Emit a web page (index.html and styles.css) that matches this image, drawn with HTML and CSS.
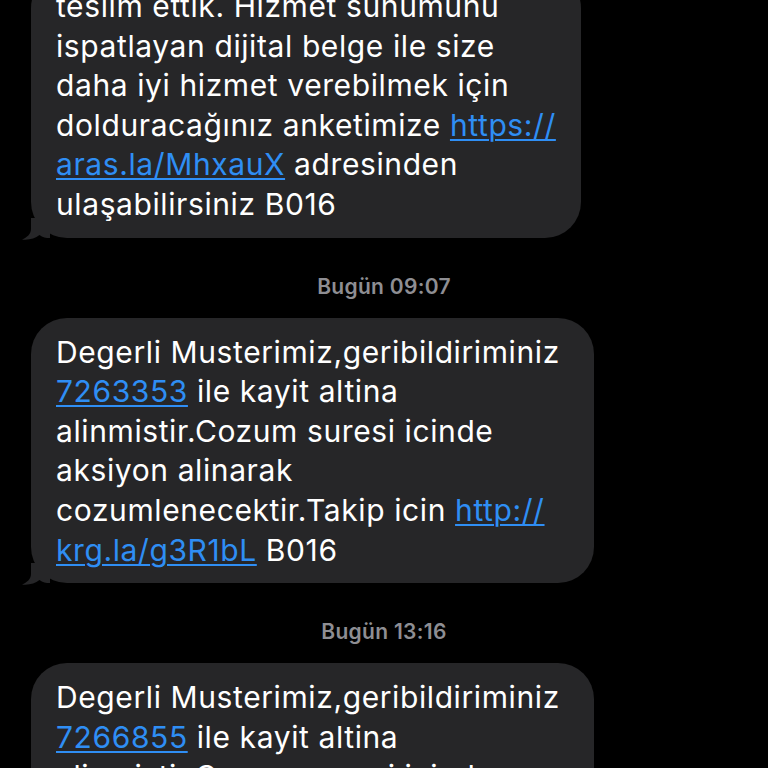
FILE: index.html
```html
<!DOCTYPE html>
<html lang="tr">
<head>
<meta charset="utf-8">
<title>Mesajlar</title>
<link rel="stylesheet" href="styles.css">
</head>
<body>
<main class="thread">
  <div class="bubble bubble-first">
    <p class="msg">teslim ettik. Hizmet sunumunu<br>ispatlayan dijital belge ile size<br>daha iyi hizmet verebilmek için<br>dolduracağınız anketimize <a class="link" href="#">https://<br>aras.la/MhxauX</a> adresinden<br>ulaşabilirsiniz B016</p>
    <svg class="tail" width="28" height="22" viewBox="0 0 28 22"><path d="M9 0V11C9 16 5 19.5 0 21.5C7 22.3 13 20.5 17.5 17C20.5 19.5 24 20 28 20V0Z"/></svg>
  </div>
  <div class="stamp">Bugün 09:07</div>
  <div class="bubble">
    <p class="msg">Degerli Musterimiz,geribildiriminiz<br><a class="link" href="#">7263353</a> ile kayit altina<br>alinmistir.Cozum suresi icinde<br>aksiyon alinarak<br>cozumlenecektir.Takip icin <a class="link" href="#">http://<br>krg.la/g3R1bL</a> B016</p>
    <svg class="tail" width="28" height="22" viewBox="0 0 28 22"><path d="M9 0V11C9 16 5 19.5 0 21.5C7 22.3 13 20.5 17.5 17C20.5 19.5 24 20 28 20V0Z"/></svg>
  </div>
  <div class="stamp">Bugün 13:16</div>
  <div class="bubble">
    <p class="msg">Degerli Musterimiz,geribildiriminiz<br><a class="link" href="#">7266855</a> ile kayit altina<br>alinmistir.Cozum suresi icinde<br>aksiyon alinarak</p>
  </div>
</main>
</body>
</html>
```
FILE: styles.css
```css
html, body {
  margin: 0;
  padding: 0;
  background: #000;
  height: 100%;
  overflow: hidden;
}
.thread {
  display: flex;
  flex-direction: column;
  align-items: flex-start;
  padding: 0 0 0 31px;
  margin-top: -28px;
  font-family: Inter, Roboto, "Noto Sans", sans-serif;
}
.bubble {
  position: relative;
  background: #262628;
  border-radius: 36px;
  padding: 15px 34px 13px 25px;
}
.bubble-first {
  padding-right: 25px;
}
.msg {
  margin: 0;
  color: #fff;
  font-size: 30px;
  line-height: 39.6px;
  letter-spacing: 0.6px;
  white-space: nowrap;
}
.link {
  color: #2f8ef4;
  text-decoration: underline;
  text-decoration-thickness: 2px;
  text-underline-offset: 3px;
}
.tail {
  position: absolute;
  left: -9px;
  bottom: -2px;
  fill: #262628;
}
.stamp {
  align-self: stretch;
  margin: 37px 0 19px -31px;
  text-align: center;
  color: #8e8e93;
  font-size: 21px;
  line-height: 24px;
  font-weight: 600;
  letter-spacing: 0.3px;
}
```
